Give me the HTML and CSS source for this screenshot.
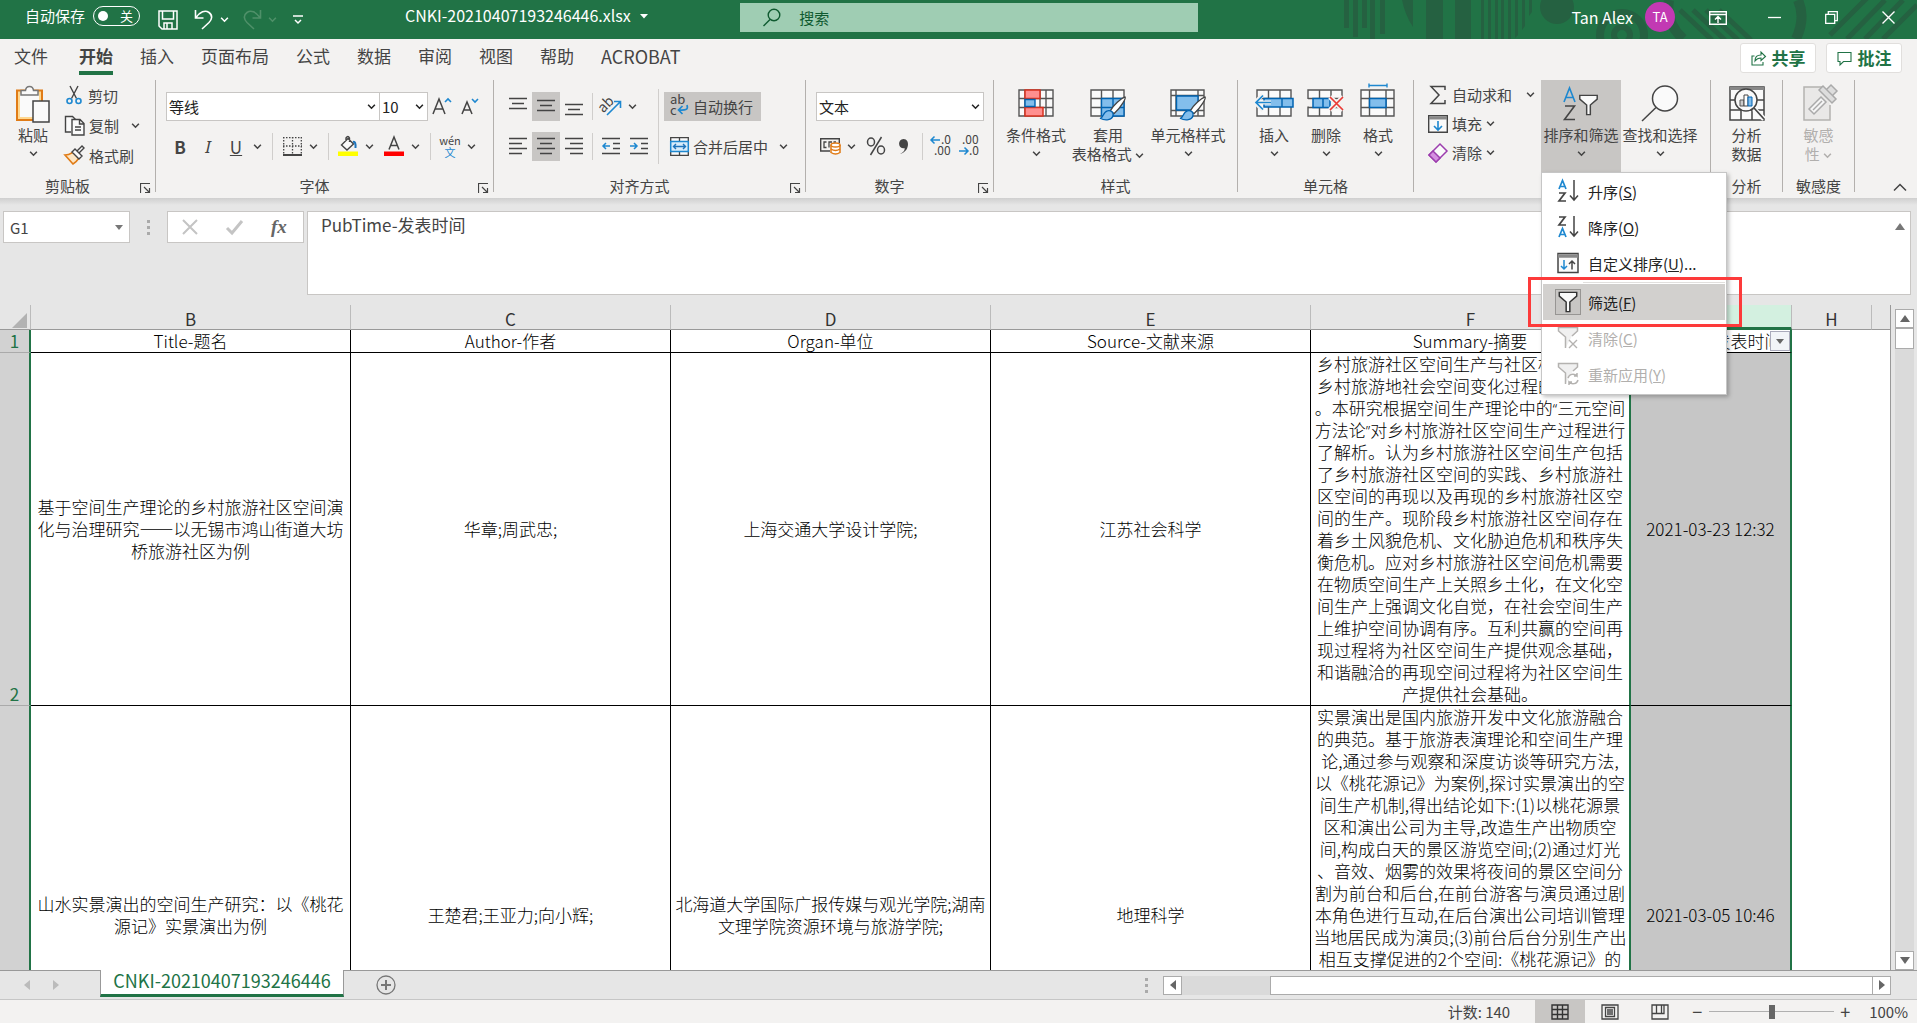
FILE: index.html
```html
<!DOCTYPE html>
<html lang="zh-CN">
<head>
<meta charset="utf-8">
<title>CNKI-20210407193246446.xlsx</title>
<link rel="stylesheet" href="styles.css">
</head>
<body>
<svg class="defs" width="0" height="0" aria-hidden="true">
  <symbol id="chev" viewBox="0 0 8 8"><path d="M1 2.5 4 5.5 7 2.5" fill="none" stroke="currentColor" stroke-width="1.4"/></symbol>
  <symbol id="launch" viewBox="0 0 11 11"><path d="M.5 10V.5H10M4 4l5 5M9.5 5v4.500H5" fill="none" stroke="currentColor" stroke-width="1.200"/></symbol>
  <symbol id="brush" viewBox="0 0 30 28"><path d="M12 16C16 9 23 3 28 1c1 1-3 10-12 18z" fill="#fff" stroke="#444" stroke-width="1.400"/><path d="M1 24c4 0 3-7 8-8 4-1 7 2 6 5-1 5-8 6-14 3z" fill="#83beec" stroke="#0063b1" stroke-width="1.400"/></symbol>
  <symbol id="funnel" viewBox="0 0 22 24"><path d="M1.500 1.500h19v4L13 12v10.500H9V12L1.500 5.500z" fill="#fafafa" stroke="currentColor" stroke-width="1.600"/></symbol>
</svg>

<header class="titlebar">
  <svg class="deco" width="577" height="39" viewBox="0 0 577 39" aria-hidden="true">
    <g fill="#256141"><path d="M4 0h5v28H4zM13 0h5v37h-5zM22 0h5v28h-5zM30 0h5v39h-5zM40 0h5v34h-5zM62 0h11v27Q65 15 62 0zM86 0h17v39H86zM115 0h16v39h-16zM141 0h3v39h-3zM148 0h3v39h-3zM155 0h3v39h-3zM161 0h3v39h-3zM168 0h3v39h-3zM175 0h3v35l-3 3zM182 0h3v26l-3 4zM189 0h3v12l-3 4z"/><circle cx="217" cy="7" r="17"/></g>
    <g fill="none" stroke="#256141"><circle cx="282" cy="35" r="22" stroke-width="8"/><circle cx="282" cy="35" r="8" stroke-width="6"/><path d="M329 0q-4 22 14 39M458 0q8 18-2 39" stroke-width="10"/><path d="M340 10l32 30M353 10l32 30M366 10l32 30M379 10l32 30M490 35 528-3M507 39 545 0M525 39 563 0M543 39l34-34" stroke-width="5"/></g>
  </svg>
  <span class="autosave" id="as">自动保存</span>
  <button class="toggle" role="switch" aria-checked="false" aria-labelledby="as"><i></i><span>关</span></button>
  <button class="qa save" aria-label="保存"><svg width="20" height="20" viewBox="0 0 20 20"><path d="M1 1h18v18H4l-3-3zM4.500 1v8h11V1M6 19v-6h8v6M9 13v6" fill="none" stroke="currentColor" stroke-width="1.500"/></svg></button>
  <button class="qa undo" aria-label="撤消"><svg width="20" height="21" viewBox="0 0 20 21"><path d="M1.500 1v8h8M2 8.500C6 3 11 .5 15 3.500c4 3 3 7 0 10L8 20" fill="none" stroke="currentColor" stroke-width="1.600"/></svg></button>
  <button class="cv" aria-label="撤消列表"><svg width="9" height="9"><use href="#chev"/></svg></button>
  <button class="qa redo" aria-label="恢复"><svg width="20" height="21" viewBox="0 0 20 21"><path d="M18.500 1v8h-8M18 8.500C14 3 9 .5 5 3.500c-4 3-3 7 0 10l7 6.500" fill="none" stroke="currentColor" stroke-width="1.600"/></svg></button>
  <button class="cv dim" aria-label="恢复列表"><svg width="9" height="9"><use href="#chev"/></svg></button>
  <button class="qa more" aria-label="自定义快速访问工具栏"><svg width="10" height="10" viewBox="0 0 10 10"><path d="M0 1h10M2 5l3 3 3-3" fill="none" stroke="currentColor" stroke-width="1.500"/></svg></button>
  <h1 class="filename">CNKI-20210407193246446.xlsx <svg width="8" height="5" viewBox="0 0 8 5"><path d="M0 0h8L4 4.500z" fill="currentColor"/></svg></h1>
  <label class="search"><svg width="18" height="19" viewBox="0 0 18 19"><circle cx="11" cy="7" r="5.800" fill="none" stroke="currentColor" stroke-width="1.400"/><path d="M7 11.500.5 18" stroke="currentColor" stroke-width="1.400"/></svg><input type="text" placeholder="搜索" aria-label="搜索"></label>
  <div class="account"><span>Tan Alex</span><b class="avatar">TA</b></div>
  <div class="winbtns">
    <button aria-label="功能区显示选项"><svg width="18" height="14" viewBox="0 0 18 14"><path d="M.7.7h16.600v12.600H.7zM.7 3.500h16.600M9 12V6M6 8.500l3-3 3 3" fill="none" stroke="currentColor" stroke-width="1.400"/></svg></button>
    <button aria-label="最小化"><svg width="13" height="13"><path d="M0 6.500h13" stroke="currentColor" stroke-width="1.300"/></svg></button>
    <button aria-label="还原"><svg width="13" height="13" viewBox="0 0 13 13"><path d="M.7 3.300h9v9h-9zM3.300 3V.7h9v9H10" fill="none" stroke="currentColor" stroke-width="1.300"/></svg></button>
    <button aria-label="关闭"><svg width="13" height="13"><path d="m.5.500 12 12m0-12-12 12" stroke="currentColor" stroke-width="1.400"/></svg></button>
  </div>
</header>

<nav class="tabs">
  <a href="#" class="file">文件</a><a href="#" class="on">开始</a><a href="#">插入</a><a href="#">页面布局</a><a href="#">公式</a><a href="#">数据</a><a href="#">审阅</a><a href="#">视图</a><a href="#">帮助</a><a href="#" class="latin">ACROBAT</a>
  <div class="tabbtns">
    <button><svg width="15" height="15" viewBox="0 0 15 15"><path d="M3.500 5H1v9h11v-3M4 10c0-4 2-6 6-6V1l4.500 4.500L10 9.500V7C7 7 5.500 8 4 10z" fill="none" stroke="currentColor" stroke-width="1.100"/></svg>共享</button>
    <button><svg width="15" height="15" viewBox="0 0 15 15"><path d="M1 1.500h13v9H6.500L3 14v-3.500H1z" fill="none" stroke="currentColor" stroke-width="1.100"/></svg>批注</button>
  </div>
</nav>

<section class="ribbon">
  <div class="group g-clip">
    <div class="body">
      <button class="big paste"><svg width="36" height="38" viewBox="0 0 36 38"><path d="M2 5.500h25V35H2z" fill="#ffd890" stroke="#e07b16" stroke-width="2"/><path d="M5 8.500h19V32H5z" fill="#fafafa"/><path d="M6 10V5.500h4.500C11 0 18 0 18.500 5.500H23V10z" fill="#fafafa" stroke="#777" stroke-width="1.500"/><path d="M18 16h16v21H18z" fill="#fafafa" stroke="#444" stroke-width="1.500"/></svg><span>粘贴</span><svg class="ch" width="9" height="9"><use href="#chev"/></svg></button>
      <div class="list">
        <button><svg width="20" height="20" viewBox="0 0 20 20"><path d="M6 1l6.500 12.500M14 1 7.500 13.500" stroke="#444" stroke-width="1.400"/><g fill="none" stroke="#1e88d0" stroke-width="1.600"><circle cx="5.500" cy="16" r="2.500"/><circle cx="14.500" cy="16" r="2.500"/></g></svg>剪切</button>
        <div class="pair"><button><svg width="21" height="21" viewBox="0 0 21 21"><path d="M7 17H1.500V1.500h7l3 3" fill="#fafafa" stroke="#444" stroke-width="1.400"/><path d="M8 4.500h8l4 4V20H8zM15.500 4.500V9H20M11 12h6M11 15h6" fill="#fafafa" stroke="#444" stroke-width="1.400"/></svg>复制</button><button class="cv" aria-label="复制选项"><svg width="9" height="9"><use href="#chev"/></svg></button></div>
        <button><svg width="21" height="20" viewBox="0 0 21 20"><path d="M1 10c5 0 5-1 8-3l6 6c-2 3-4 5-6 6z" fill="#fde6c4" stroke="#e07b16" stroke-width="1.600"/><path d="M8 7l3-3 7 7-3 3zM13 6l5-5 2 2-5 5" fill="#fafafa" stroke="#444" stroke-width="1.400"/></svg>格式刷</button>
      </div>
    </div>
    <div class="glabel"><span>剪贴板</span><button aria-label="剪贴板选项"><svg width="11" height="11"><use href="#launch"/></svg></button></div>
  </div>

  <div class="group g-font">
    <div class="body rows">
      <div class="row">
        <label class="combo font"><select aria-label="字体"><option>等线</option></select><svg width="9" height="9"><use href="#chev"/></svg></label><label class="combo size"><select aria-label="字号"><option>10</option></select><svg width="9" height="9"><use href="#chev"/></svg></label>
        <button class="ic grow" aria-label="增大字号"><svg width="20" height="18" viewBox="0 0 20 18"><path d="M1 17 7 2l6 15M3 12h8" fill="none" stroke="#444" stroke-width="1.500"/><path d="m13 5 3-3 3 3" fill="none" stroke="#1e88d0" stroke-width="1.600"/></svg></button>
        <button class="ic grow" aria-label="减小字号"><svg width="18" height="18" viewBox="0 0 18 18"><path d="M1 17 6 5l5 12M3 13h6" fill="none" stroke="#444" stroke-width="1.500"/><path d="m11 2 3 3 3-3" fill="none" stroke="#1e88d0" stroke-width="1.600"/></svg></button>
      </div>
      <div class="row">
        <button class="ic"><b>B</b></button><button class="ic"><em>I</em></button><button class="ic"><u>U</u></button><button class="cv" aria-label="下划线选项"><svg width="9" height="9"><use href="#chev"/></svg></button><i class="sep wide"></i>
        <button class="ic" aria-label="边框"><svg width="19" height="19" viewBox="0 0 19 19"><path d="M.7 0v17M18.300 0v17M9.500 0v17M0 .7h19M0 9h19" stroke="#444" stroke-width="1.300" stroke-dasharray="1.500 1.500"/><path d="M0 18h19" stroke="#444" stroke-width="2"/></svg></button><button class="cv" aria-label="边框选项"><svg width="9" height="9"><use href="#chev"/></svg></button><i class="sep wide"></i>
        <button class="ic" aria-label="填充颜色"><svg width="20" height="20" viewBox="0 0 20 20"><path d="M3.500 9 10 2.500l5.500 5.500L9 14zM8 5V2q2-3 3.500 0v4" fill="#fafafa" stroke="#444" stroke-width="1.400"/><path d="M15 6q3-1 2.500 6" fill="none" stroke="#1e74bb" stroke-width="2"/><path d="M0 15.500h20V20H0z" fill="#ff0"/></svg></button><button class="cv" aria-label="填充颜色选项"><svg width="9" height="9"><use href="#chev"/></svg></button>
        <button class="ic nudge" aria-label="字体颜色"><svg width="20" height="20" viewBox="0 0 20 20"><path d="M5 13.500 10 1l5 12.500M6.500 9.500h7" fill="none" stroke="#444" stroke-width="1.500"/><path d="M0 15.500h20V20H0z" fill="red"/></svg></button><button class="cv" aria-label="字体颜色选项"><svg width="9" height="9"><use href="#chev"/></svg></button><i class="sep wide"></i>
        <button class="ic wen"><span>wén</span><span class="blue">文</span></button><button class="cv" aria-label="拼音选项"><svg width="9" height="9"><use href="#chev"/></svg></button>
      </div>
    </div>
    <div class="glabel"><span>字体</span><button aria-label="字体选项"><svg width="11" height="11"><use href="#launch"/></svg></button></div>
  </div>

  <div class="group g-align">
    <div class="body">
      <div class="rows left">
        <div class="row">
          <button class="ic" aria-label="顶端对齐"><svg width="18" height="18"><path d="M0 1.500h18M3 6.500h12M0 11.500h18" stroke="#444" stroke-width="1.500"/></svg></button><button class="ic on" aria-label="垂直居中"><svg width="18" height="18"><path d="M0 3.500h18M3 8.500h12M0 13.500h18" stroke="#444" stroke-width="1.500"/></svg></button><button class="ic" aria-label="底端对齐"><svg width="18" height="18"><path d="M0 7.500h18M3 12.500h12M0 17.500h18" stroke="#444" stroke-width="1.500"/></svg></button><i class="sep"></i><button class="ic" aria-label="方向"><svg width="22" height="22" viewBox="0 0 22 22"><text x="-2" y="14" transform="rotate(-45 6 10)" font-size="14" fill="#444">ab</text><path d="M7 20 20 7M14 6.500h6.500V13" fill="none" stroke="#1e88d0" stroke-width="1.600"/></svg></button><button class="cv" aria-label="方向选项"><svg width="9" height="9"><use href="#chev"/></svg></button>
        </div>
        <div class="row">
          <button class="ic" aria-label="左对齐"><svg width="18" height="18"><path d="M0 1.500h18M0 6.500h13M0 11.500h18M0 16.500h13" stroke="#444" stroke-width="1.500"/></svg></button><button class="ic on" aria-label="居中"><svg width="18" height="18"><path d="M0 1.500h18M3 6.500h12M0 11.500h18M3 16.500h12" stroke="#444" stroke-width="1.500"/></svg></button><button class="ic" aria-label="右对齐"><svg width="18" height="18"><path d="M0 1.500h18M5 6.500h13M0 11.500h18M5 16.500h13" stroke="#444" stroke-width="1.500"/></svg></button><i class="sep"></i><button class="ic" aria-label="减少缩进量"><svg width="18" height="18"><path d="M0 1.500h18M11 6.500h7M11 11.500h7M0 16.500h18" stroke="#444" stroke-width="1.500"/><path d="M8 9H1m3-3L1 9l3 3" fill="none" stroke="#1e88d0" stroke-width="1.500"/></svg></button><button class="ic" aria-label="增加缩进量"><svg width="18" height="18"><path d="M0 1.500h18M11 6.500h7M11 11.500h7M0 16.500h18" stroke="#444" stroke-width="1.500"/><path d="M0 9h7M4 6l3 3-3 3" fill="none" stroke="#1e88d0" stroke-width="1.500"/></svg></button>
        </div>
      </div>
      <i class="sep tall"></i>
      <div class="rows right">
        <div class="row"><button class="txt on"><svg width="19" height="20" viewBox="0 0 19 20"><text x="0" y="8" font-size="13" fill="#444">ab</text><text x="0" y="19" font-size="13" fill="#444">c</text><path d="M17 9c2 6-4 5-8 5m3.500-4L8.500 14l4 4" fill="none" stroke="#1e88d0" stroke-width="1.700"/></svg>自动换行</button></div>
        <div class="row"><button class="txt"><svg width="19" height="19" viewBox="0 0 19 19"><path d="M.7.7h17.600v17.600H.7zM9.500 0v4M9.500 15v4" fill="#fafafa" stroke="#444" stroke-width="1.300"/><path d="M.7 4.500h17.600v10H.7z" fill="#d8ecfa" stroke="#1e88d0" stroke-width="1.500"/><path d="M3.500 9.500h12M6 7 3.500 9.500 6 12m7-5 2.500 2.500L13 12" fill="none" stroke="#1e74bb" stroke-width="1.400"/></svg>合并后居中</button><button class="cv" aria-label="合并选项"><svg width="9" height="9"><use href="#chev"/></svg></button></div>
      </div>
    </div>
    <div class="glabel"><span>对齐方式</span><button aria-label="对齐选项"><svg width="11" height="11"><use href="#launch"/></svg></button></div>
  </div>

  <div class="group g-num">
    <div class="body rows">
      <div class="row"><label class="combo fmt"><select aria-label="数字格式"><option>文本</option></select><svg width="9" height="9"><use href="#chev"/></svg></label></div>
      <div class="row">
        <button class="ic" aria-label="会计数字格式"><svg width="21" height="18" viewBox="0 0 21 18"><path d="M10 14H.7V1.700h18.600V6" fill="none" stroke="#444" stroke-width="1.400"/><path d="M6.500 5H4v5.500h2.500M12 5H9v5.500M16 5h-2.500" fill="none" stroke="#444" stroke-width="1.300"/><path d="M11 8v7.500q4.500 3 9 0V8" fill="#fff" stroke="#e07b16" stroke-width="1.500"/><ellipse cx="15.500" cy="8" rx="4.500" ry="2" fill="#fff" stroke="#e07b16" stroke-width="1.500"/><path d="M11 12q4.500 3 9 0" fill="none" stroke="#e07b16" stroke-width="1.500"/></svg></button><button class="cv" aria-label="货币选项"><svg width="9" height="9"><use href="#chev"/></svg></button><button class="ic pct nudge" aria-label="百分比"><svg width="20" height="18" viewBox="0 0 20 18"><g fill="none" stroke="#444" stroke-width="1.500"><ellipse cx="5" cy="5" rx="3.500" ry="4"/><ellipse cx="15" cy="13" rx="3.500" ry="4"/><path d="M15.500 0 4.500 18"/></g></svg></button><button class="ic" aria-label="千位分隔样式"><svg width="12" height="18" viewBox="0 0 12 18"><path d="M2 17c4-2 5-4 4.500-6C0 13-1 2 5.500 2c7 0 6 13-3.500 15z" fill="#444"/></svg></button><i class="sep"></i>
        <button class="ic" aria-label="增加小数位数"><svg width="20" height="20" viewBox="0 0 20 20"><text x="10" y="8" font-size="12" fill="#444">.0</text><text x="3" y="19" font-size="12" fill="#444">.00</text><path d="M9 4H0m3.500-3.500L0 4l3.500 3.500" fill="none" stroke="#1e88d0" stroke-width="1.500"/></svg></button><button class="ic" aria-label="减少小数位数"><svg width="20" height="20" viewBox="0 0 20 20"><text x="3" y="8" font-size="12" fill="#444">.00</text><text x="10" y="19" font-size="12" fill="#444">.0</text><path d="M0 15h9M5.500 11.500 9 15l-3.500 3.500" fill="none" stroke="#1e88d0" stroke-width="1.500"/></svg></button>
      </div>
    </div>
    <div class="glabel"><span>数字</span><button aria-label="数字选项"><svg width="11" height="11"><use href="#launch"/></svg></button></div>
  </div>

  <div class="group g-style">
    <div class="body">
      <button class="big"><svg width="38" height="38" viewBox="0 0 38 38"><path d="M2 5h34v26H2zM2 13.500h34M2 22.500h34M8 5v26M29 5v26M23 5v26" fill="#fafafa" stroke="#555" stroke-width="1.400"/><path d="M8 5h15v8.500H8zM8 22.500h18V31H8z" fill="#ff8f8f" stroke="#d8321f" stroke-width="1.500"/><path d="M8 14.500h10v7H8z" fill="#83beec" stroke="#0063b1" stroke-width="1.400"/></svg><span>条件格式</span><svg class="ch" width="9" height="9"><use href="#chev"/></svg></button>
      <button class="big"><svg width="38" height="38" viewBox="0 0 38 38"><path d="M2 5h33v26H2zM2 13.500h33M2 22.500h33M12.500 5v26M24 5v26" fill="#fafafa" stroke="#555" stroke-width="1.400"/><path d="M12.500 13.500H35V31H12.500z" fill="#83beec"/><path d="M12.500 31V13.500H35V31H12.500M24 13.500V31M12.500 22.500H35" fill="none" stroke="#0063b1" stroke-width="1.400"/><use href="#brush" x="10" y="11" width="28" height="26"/></svg><span>套用<br>表格格式 <svg width="9" height="9"><use href="#chev"/></svg></span></button>
      <button class="big cellstyle"><svg width="38" height="38" viewBox="0 0 38 38"><path d="M2 5h33v26H2zM2 10.500h33M2 25.500h33M7 5v26M29 5v26" fill="#fafafa" stroke="#555" stroke-width="1.400"/><path d="M7.500 11H29v14H7.500z" fill="#83beec" stroke="#0063b1" stroke-width="1.400"/><use href="#brush" x="10" y="11" width="28" height="26"/></svg><span>单元格样式</span><svg class="ch" width="9" height="9"><use href="#chev"/></svg></button>
    </div>
    <div class="glabel"><span>样式</span></div>
  </div>

  <div class="group g-cells">
    <div class="body">
      <button class="big"><svg width="40" height="38" viewBox="0 0 40 38"><path d="M3 5h34v26H3zM14.500 5v26M26 5v26M3 13.500h34" fill="#fafafa" stroke="#555" stroke-width="1.400"/><path d="M10 13.500h29v8.500H10z" fill="#83beec" stroke="#0063b1" stroke-width="1.500"/><path d="M28 13.500V22" stroke="#0063b1" stroke-width="1.400"/><path d="M17 17.500H2M9 9.500l-8 8 8 8" fill="none" stroke="#f3f2f1" stroke-width="4"/><path d="M17 17.500H2M9 10.500l-7 7 7 7" fill="none" stroke="#1e88d0" stroke-width="1.700"/></svg><span>插入</span><svg class="ch" width="9" height="9"><use href="#chev"/></svg></button>
      <button class="big"><svg width="40" height="38" viewBox="0 0 40 38"><path d="M2 5h34v26H2zM13.500 5v26M25 5v26" fill="#fafafa" stroke="#555" stroke-width="1.400"/><path d="M0 14h38v7.500H0z" fill="#f3f2f1"/><path d="M2 13.500h34M2 22.500h34" stroke="#555" stroke-width="1.400"/><path d="M7 13.500h17v9H7zM17 13.500v9" fill="#83beec" stroke="#0063b1" stroke-width="1.500"/><path d="m24 12 13 13m0-13L24 25" stroke="#f3f2f1" stroke-width="5"/><path d="m24 12 13 13m0-13L24 25" stroke="#ea3a35" stroke-width="1.700"/></svg><span>删除</span><svg class="ch" width="9" height="9"><use href="#chev"/></svg></button>
      <button class="big"><svg width="38" height="38" viewBox="0 0 38 38"><path d="M2 5h33v26H2zM2 13.500h33M2 22.500h33M10.500 5v26M27 5v26" fill="#fafafa" stroke="#555" stroke-width="1.400"/><path d="M10.500 13.500H27v9H10.500z" fill="#83beec" stroke="#0063b1" stroke-width="1.500"/><path d="M10 .5h18M10-1.500v4M28-1.500v4" stroke="#1e88d0" stroke-width="1.400"/></svg><span>格式</span><svg class="ch" width="9" height="9"><use href="#chev"/></svg></button>
    </div>
    <div class="glabel"><span>单元格</span></div>
  </div>

  <div class="group g-edit">
    <div class="body">
      <div class="list">
        <div class="pair"><button><svg width="20" height="20" viewBox="0 0 20 20"><path d="M17 5V1.500H3L11 10l-8 8.500h14V15" fill="none" stroke="#444" stroke-width="1.500"/></svg>自动求和</button><button class="cv" aria-label="求和选项"><svg width="9" height="9"><use href="#chev"/></svg></button></div>
        <button><svg width="20" height="18" viewBox="0 0 20 18"><path d="M.7.7h18.600v16.600H.7z" fill="#fafafa" stroke="#444" stroke-width="1.400"/><path d="M1 3h18" stroke="#888" stroke-width="3"/><path d="M10 6v9M6 11l4 4 4-4" fill="none" stroke="#1e88d0" stroke-width="1.600"/></svg>填充<svg width="9" height="9"><use href="#chev"/></svg></button>
        <button><svg width="20" height="20" viewBox="0 0 20 20"><path d="M1 12 12 1l7 7L8 19z" fill="#fafafa" stroke="#9c3dae" stroke-width="1.500"/><path d="m1 12 4-4 7 7-4 4z" fill="#d48fe0" stroke="#9c3dae" stroke-width="1.500"/></svg>清除<svg width="9" height="9"><use href="#chev"/></svg></button>
      </div>
      <div class="sortwrap">
        <button class="big on" aria-haspopup="true" aria-expanded="true"><svg width="38" height="38" viewBox="0 0 38 38"><path d="M2 17 7.500 3 13 17M4 12.500h7" fill="none" stroke="#1e88d0" stroke-width="1.600"/><path d="M3 21h9.500L2.500 34.500H13" fill="none" stroke="#444" stroke-width="1.600"/><use href="#funnel" x="16" y="9" width="21" height="22"/></svg><span>排序和筛选</span><svg class="ch" width="9" height="9"><use href="#chev"/></svg></button>
        <div class="menu" role="menu">
          <button role="menuitem"><svg width="22" height="24" viewBox="0 0 22 24"><path d="M2 10 5.500 1.500 9 10M3 7.500h5" fill="none" stroke="#1e88d0" stroke-width="1.700"/><path d="M2 14h6L2 22h7" fill="none" stroke="#444" stroke-width="1.700"/><path d="M17 1v20m-4-4.500 4 4.500 4-4.500" fill="none" stroke="#444" stroke-width="1.500"/></svg><span>升序(<u>S</u>)</span></button>
          <button role="menuitem"><svg width="22" height="24" viewBox="0 0 22 24"><path d="M2 22 5.500 13.500 9 22M3 19.500h5" fill="none" stroke="#1e88d0" stroke-width="1.700"/><path d="M2 2h6L2 10h7" fill="none" stroke="#444" stroke-width="1.700"/><path d="M17 1v20m-4-4.500 4 4.500 4-4.500" fill="none" stroke="#444" stroke-width="1.500"/></svg><span>降序(<u>O</u>)</span></button>
          <button role="menuitem"><svg width="22" height="22" viewBox="0 0 22 22"><path d="M1 1.500h20v19H1z" fill="#fafafa" stroke="#444" stroke-width="1.500"/><path d="M1 4h20" stroke="#888" stroke-width="3.500"/><path d="M7 8v9m-3-3 3 3 3-3" fill="none" stroke="#1e88d0" stroke-width="1.500"/><path d="M15 17.500V9m-3 3 3-3 3 3" fill="none" stroke="#444" stroke-width="1.500"/></svg><span>自定义排序(<u>U</u>)...</span></button>
          <hr>
          <button role="menuitem" class="hot"><span class="mark"><svg width="22" height="22"><use href="#funnel"/></svg></span><span>筛选(<u>F</u>)</span></button>
          <button role="menuitem" disabled><svg width="22" height="24" viewBox="0 0 22 24"><path d="M8.500 22V11L1.500 5V1.500h19V5L15 10" fill="#f0f0f0" stroke="#b4b2b0" stroke-width="1.500"/><path d="m12 14 8 8m0-8-8 8" stroke="#b4b2b0" stroke-width="1.400"/></svg><span>清除(<u>C</u>)</span></button>
          <button role="menuitem" disabled><svg width="22" height="24" viewBox="0 0 22 24"><path d="M8.500 22V11L1.500 5V1.500h19V5L16 9" fill="#f0f0f0" stroke="#b4b2b0" stroke-width="1.500"/><path d="M11 16c1-4 6-5 9-2v-3m0 3h-3M21 18c-1 4-6 5-9 2v3m0-3h3" fill="none" stroke="#b4b2b0" stroke-width="1.500"/></svg><span>重新应用(<u>Y</u>)</span></button>
        </div>
      </div>
      <button class="big find"><svg width="38" height="38" viewBox="0 0 38 38"><circle cx="24" cy="13.500" r="12.500" fill="#fafafa" stroke="#444" stroke-width="1.500"/><path d="M15 22.500 1 36" stroke="#444" stroke-width="1.500"/></svg><span>查找和选择</span><svg class="ch" width="9" height="9"><use href="#chev"/></svg></button>
    </div>
  </div>

  <div class="group g-one">
    <div class="body"><button class="big"><svg width="38" height="38" viewBox="0 0 38 38"><path d="M2 2h34v33H2zM2 15h34M2 25h34M13 25v10M24 25v10" fill="#fafafa" stroke="#444" stroke-width="1.500"/><path d="M2 3.500h34" stroke="#888" stroke-width="3"/><circle cx="18" cy="15" r="11" fill="#fafafa" stroke="#444" stroke-width="1.500"/><path d="m26 24 10 10" stroke="#fafafa" stroke-width="5"/><path d="m26 23 10 11" stroke="#444" stroke-width="1.700"/><path d="M12 15h4v6h-4z" fill="#ccc" stroke="#555"/><path d="M16 10h4v11h-4z" fill="#fff" stroke="#444"/><path d="M20 12h4v9h-4z" fill="#83beec" stroke="#0063b1"/></svg><span>分析<br>数据</span></button></div>
    <div class="glabel"><span>分析</span></div>
  </div>
  <div class="group g-one">
    <div class="body"><button class="big" disabled><svg width="38" height="38" viewBox="0 0 38 38"><path d="M24 2H4v33h26V20" fill="#e9e8e7" stroke="#b4b2b0" stroke-width="1.500"/><path d="m9 24 12-12 5 5-12 12z" fill="#f6f6f6" stroke="#aaa" stroke-width="1.500"/><path d="m13 25 9-9" stroke="#aaa" stroke-width="1.500"/><path d="m19 5 4-4 13 13-4 4zM27 4l4-4 6 6-4 4" fill="#ddd" stroke="#aaa" stroke-width="1.500"/></svg><span>敏感<br>性 <svg width="9" height="9"><use href="#chev"/></svg></span></button></div>
    <div class="glabel"><span>敏感度</span></div>
  </div>
  <button class="collapse" aria-label="折叠功能区"><svg width="14" height="9"><path d="m1 7.500 6-6 6 6" fill="none" stroke="#444" stroke-width="1.500"/></svg></button>
</section>

<section class="formula">
  <label class="combo namebox"><input type="text" value="G1" aria-label="名称框"><svg width="8" height="5"><path d="M0 0h8L4 5z" fill="#777"/></svg></label>
  <i class="dots"></i>
  <div class="fxbox">
    <button aria-label="取消"><svg width="16" height="16"><path d="m1 1 14 14m0-14L1 15" stroke="#c4c4c4" stroke-width="2"/></svg></button>
    <button aria-label="输入"><svg width="17" height="15"><path d="m1 8 5 5L16 1" fill="none" stroke="#c4c4c4" stroke-width="3"/></svg></button>
    <button class="fx">fx</button>
  </div>
  <div class="fbox"><textarea aria-label="编辑栏">PubTime-发表时间</textarea><svg width="10" height="7"><path d="M0 7h10L5 0z" fill="#777"/></svg></div>
</section>

<main class="gridwrap">
  <div class="sheet">
    <table>
      <colgroup><col class="c-row"><col class="c-wide"><col class="c-wide"><col class="c-wide"><col class="c-wide"><col class="c-wide"><col class="c-g"><col class="c-h"><col></colgroup>
      <thead><tr><th class="corner"><svg width="15" height="15"><path d="M15 0v15H0z" fill="#b2b2b2"/></svg></th><th>B</th><th>C</th><th>D</th><th>E</th><th>F</th><th class="sel">G</th><th>H</th><th></th></tr></thead>
      <tbody>
        <tr class="r1"><th>1</th><td>Title-题名</td><td>Author-作者</td><td>Organ-单位</td><td>Source-文献来源</td><td class="f">Summary-摘要</td><td class="g head"><div>PubTime-发表时间<button aria-label="筛选"><svg width="8" height="5"><path d="M0 0h8L4 5z" fill="#666"/></svg></button></div></td><td class="e"></td><td class="e"></td></tr>
        <tr class="r2"><th>2</th><td>基于空间生产理论的乡村旅游社区空间演<br>化与治理研究——以无锡市鸿山街道大坊<br>桥旅游社区为例</td><td>华章;周武忠;</td><td>上海交通大学设计学院;</td><td>江苏社会科学</td><td class="f">乡村旅游社区空间生产与社区权力关系是<br>乡村旅游地社会空间变化过程的重要视角<br>。本研究根据空间生产理论中的<span class="q">“</span>三元空间<br>方法论<span class="q">”</span>对乡村旅游社区空间生产过程进行<br>了解析。认为乡村旅游社区空间生产包括<br>了乡村旅游社区空间的实践、乡村旅游社<br>区空间的再现以及再现的乡村旅游社区空<br>间的生产。现阶段乡村旅游社区空间存在<br>着乡土风貌危机、文化胁迫危机和秩序失<br>衡危机。应对乡村旅游社区空间危机需要<br>在物质空间生产上关照乡土化，在文化空<br>间生产上强调文化自觉，在社会空间生产<br>上维护空间协调有序。互利共赢的空间再<br>现过程将为社区空间生产提供观念基础，<br>和谐融洽的再现空间过程将为社区空间生<br>产提供社会基础。</td><td class="g">2021-03-23 12:32</td><td class="e"></td><td class="e"></td></tr>
        <tr class="r3"><th></th><td>山水实景演出的空间生产研究：以《桃花<br>源记》实景演出为例</td><td>王楚君;王亚力;向小辉;</td><td>北海道大学国际广报传媒与观光学院;湖南<br>文理学院资源环境与旅游学院;</td><td>地理科学</td><td class="f top">实景演出是国内旅游开发中文化旅游融合<br>的典范。基于旅游表演理论和空间生产理<br>论,通过参与观察和深度访谈等研究方法,<br>以《桃花源记》为案例,探讨实景演出的空<br>间生产机制,得出结论如下:(1)以桃花源景<br>区和演出公司为主导,改造生产出物质空<br>间,构成白天的景区游览空间;(2)通过灯光<br>、音效、烟雾的效果将夜间的景区空间分<br>割为前台和后台,在前台游客与演员通过剧<br>本角色进行互动,在后台演出公司培训管理<br>当地居民成为演员;(3)前台后台分别生产出<br>相互支撑促进的2个空间:《桃花源记》的</td><td class="g">2021-03-05 10:46</td><td class="e"></td><td class="e"></td></tr>
      </tbody>
    </table>
  </div>
  <div class="vscroll"><button aria-label="向上滚动"><svg width="10" height="7"><path d="M0 7h10L5 0z" fill="#666"/></svg></button><i class="thumb"></i><i class="track"></i><button aria-label="向下滚动"><svg width="10" height="7"><path d="M0 0h10L5 7z" fill="#666"/></svg></button></div>
</main>

<footer class="sheetbar">
  <button class="nav" aria-label="上一张"><svg width="6" height="10"><path d="M6 0v10L0 5z" fill="#bbb"/></svg></button>
  <button class="nav" aria-label="下一张"><svg width="6" height="10"><path d="M0 0v10l6-5z" fill="#bbb"/></svg></button>
  <a href="#" class="sheettab">CNKI-20210407193246446</a>
  <button class="add" aria-label="新工作表"><svg width="20" height="20"><circle cx="10" cy="10" r="9" fill="none" stroke="#777" stroke-width="1.300"/><path d="M5 10h10M10 5v10" stroke="#777" stroke-width="2"/></svg></button>
  <i class="dots"></i>
  <div class="hscroll"><button aria-label="向左滚动"><svg width="6" height="10"><path d="M6 0v10L0 5z" fill="#666"/></svg></button><i class="track"></i><i class="thumb"></i><button aria-label="向右滚动"><svg width="6" height="10"><path d="M0 0v10l6-5z" fill="#666"/></svg></button></div>
</footer>
<footer class="status">
  <span>计数: 140</span>
  <div class="views">
    <button class="on" aria-label="普通"><svg width="18" height="16"><path d="M1 1h16v14H1zM1 5.500h16M1 10.500h16M6.500 1v14M11.500 1v14" fill="none" stroke="#333" stroke-width="1.400"/></svg></button>
    <button aria-label="页面布局"><svg width="18" height="16"><path d="M1 1h16v14H1zM4.500 3.500h9v9h-9zM6 6h6M6 8h6M6 10h6" fill="none" stroke="#444" stroke-width="1.300"/></svg></button>
    <button aria-label="分页预览"><svg width="18" height="16"><path d="M1 1h16v14H1zM1 9.500h9.500V1M5.500 1v8.500M10.500 9.500H13V1" fill="none" stroke="#444" stroke-width="1.300"/></svg></button>
  </div>
  <button class="zb">−</button><input type="range" min="0" max="100" value="50" aria-label="缩放"><button class="zb">+</button><span class="zoom">100%</span>
</footer>
</body>
</html>
```
FILE: styles.css
```css
* { box-sizing: border-box; }
body {
  margin: 0;
  height: 100vh;
  display: flex;
  flex-direction: column;
  overflow: hidden;
  background: #e6e6e6;
  color: #444;
  font: 15px/19px "Noto Sans CJK SC", sans-serif;
}
button, input, select, textarea { font: inherit; color: inherit; }
button { border: 0; padding: 0; background: none; display: flex; align-items: center; justify-content: center; white-space: nowrap; }
a { color: inherit; text-decoration: none; }
svg { flex: none; overflow: visible; }
svg text { font-family: "Noto Sans CJK SC", sans-serif; }
.defs { position: absolute; }

/* title bar */
.titlebar { position: relative; flex: none; height: 39px; padding-left: 25px; display: flex; align-items: center; background: #217346; color: #fff; }
.deco { position: absolute; right: 0; top: 0; overflow: hidden; }
.titlebar > :not(.deco) { z-index: 1; }
.autosave { width: 68px; margin-bottom: 8px; }
.toggle { width: 47px; height: 20px; margin-bottom: 8px; padding: 0 6px 0 4px; justify-content: space-between; border: 1px solid #fff; border-radius: 10px; font-size: 13px; line-height: 18px; }
.toggle i { width: 10px; height: 10px; border-radius: 5px; background: #fff; }
.save { margin-left: 18px; }
.undo { margin-left: 16px; }
.cv { width: 14px; height: 28px; flex: none; }
.undo + .cv, .redo + .cv { margin-left: 3px; }
.redo { margin-left: 11px; color: #4f9069; }
.dim { color: #4f9069; }
.more { margin-left: 14px; }
.filename { flex: 11; min-width: 0; margin: 0 0 10px; text-indent: 102px; font-size: 16px; line-height: 20px; font-weight: 400; white-space: nowrap; }
.filename svg { margin: 0 0 3px 6px; }
.search { width: 458px; height: 29px; margin-bottom: 4px; padding-left: 23px; display: flex; align-items: center; gap: 18px; background: #9fcdb3; color: #0f5a30; }
.search input { flex: 1; border: 0; background: none; padding: 0; }
.search input::placeholder { color: inherit; opacity: 1; }
.account { flex: 12; min-width: 0; margin-bottom: 5px; display: flex; align-items: center; justify-content: flex-end; gap: 12px; font-size: 16px; }
.avatar { width: 30px; height: 30px; border-radius: 15px; background: #c239b3; font-size: 13px; line-height: 30px; font-weight: 400; text-align: center; }
.winbtns { display: flex; margin: 0 0 4px 14px; }
.winbtns button { width: 57px; height: 34px; }

/* tabs */
.tabs { flex: none; height: 41px; padding: 4px 15px 0 14px; display: flex; gap: 27px; background: #f3f2f1; font-size: 17px; line-height: 26px; }
.tabs a { height: 32px; }
.tabs .file { margin-right: 4px; }
.tabs .on { font-weight: 700; border-bottom: 4px solid #217346; background: none; }
.tabs .latin { font-size: 18px; }
.tabbtns { margin-left: auto; display: flex; gap: 10px; }
.tabbtns button { width: 76px; height: 30px; gap: 6px; border: 1px solid #e1dfdd; border-radius: 3px; background: #fff; color: #217346; font-weight: 700; }

/* ribbon */
.ribbon { flex: none; display: flex; height: 118px; padding-bottom: 6px; background: #f3f2f1; }
.group { display: flex; flex-direction: column; border-right: 1px solid #b3b0ad; flex: none; }
.body { flex: 1; display: flex; }
.glabel { display: flex; height: 12px; line-height: 12px; text-align: center; }
.glabel span { flex: 1; }
.glabel button { width: 20px; padding-top: 4px; }
.g-clip { width: 156px; }
.g-font { width: 338px; }
.g-align { width: 312px; }
.g-num { width: 188px; }
.g-style { width: 244px; }
.g-style .body { padding-left: 6px; }
.g-cells { width: 176px; }
.g-cells .body { padding-left: 10px; }
.g-edit { width: 297px; }
.g-one { width: 72px; }
.big { width: 72px; height: 92px; padding-top: 5px; flex-direction: column; justify-content: flex-start; }
.big > svg:first-child { margin-bottom: 2px; }
.big .ch { margin-top: 5px; }
.big:disabled { color: #b1afad; }
.big.paste { width: 64px; padding-left: 2px; }
.cellstyle { width: 88px; }
.g-cells .big { width: 52px; }
.find { width: 78px; }
.on { background: #c8c6c4; }
.list { display: flex; flex-direction: column; align-items: flex-start; }
.list button { gap: 4px; height: 29px; }
.g-clip .list > * { height: 30px; }
.pair { display: flex; align-items: center; gap: 11px; }
.g-clip .pair { gap: 9px; }
.g-edit .list { width: 127px; padding-left: 14px; }
.rows { display: flex; flex-direction: column; padding: 6px 0 0 10px; }
.row { display: flex; align-items: center; height: 40px; }
.ic { width: 28px; height: 29px; flex: none; font-size: 17px; }
.ic em { font-family: "Noto Sans", sans-serif; }
.nudge { margin-left: 4px; }
.sep { width: 1px; height: 27px; margin: 0 4px; background: #d0cecc; }
.wide { margin: 0 5px 0 8px; }
.tall { height: 75px; margin: 9px 5px 0 0; }
.left { width: 164px; }
.right { padding-left: 0; }
.txt { height: 29px; padding: 0 8px 0 6px; gap: 4px; }
.wen { flex-direction: column; font-size: 11px; line-height: 12px; }
.blue { color: #1e88d0; }
.combo { display: grid; height: 29px; align-items: center; border: 1px solid #c8c6c4; background: #fff; color: #222; }
.combo > * { grid-area: 1 / 1; }
.combo > svg { justify-self: end; margin-right: 3px; pointer-events: none; }
.combo select, .combo input { appearance: none; width: 100%; height: 27px; border: 0; padding: 0 2px; background: none; min-width: 0; }
.font { width: 214px; }
.size { width: 49px; margin-left: -1px; }
.fmt { width: 168px; }
.collapse { margin: auto 10px 0 auto; }

/* sort and filter menu */
.sortwrap { position: relative; width: 80px; }
.sortwrap > .big { width: 80px; }
.menu { position: absolute; z-index: 5; left: 0; top: 92px; width: 186px; padding: 0 1px 2px; border: 1px solid #c6c6c6; background: #fff; color: #222; box-shadow: 2px 2px 4px rgba(0, 0, 0, .25); }
.menu button { width: 100%; height: 36px; padding-left: 14px; gap: 9px; justify-content: flex-start; }
.menu button:disabled { color: #b1afad; }
.menu hr { margin: 1px 0 1px 40px; border: 0; border-top: 1px solid #e1dfdd; }
.menu .hot { position: relative; padding-left: 12px; gap: 7px; background: #d2d0ce; }
.hot::after { content: ""; position: absolute; inset: -7px -17px -7px -15px; border: 3px solid #fd3a3a; }
.mark { display: flex; padding: 1px; border: 1px solid #979593; background: #c8c6c4; color: #333; }

/* formula bar */
.formula { flex: none; display: flex; height: 107px; padding: 13px 6px 10px 3px; background: linear-gradient(#cfcfcf, #e6e6e6 7px); }
.namebox { width: 127px; height: 32px; color: #444; }
.combo.namebox input { padding-left: 6px; }
.namebox > svg { margin-right: 6px; }
.dots { width: 3px; height: 15px; background: repeating-linear-gradient(#aaa 0 3px, transparent 3px 6px); }
.formula .dots { margin: 9px 17px; }
.fxbox { display: flex; width: 137px; height: 32px; margin-right: 3px; padding: 0 2px 0 0; border: 1px solid #c8c6c4; background: #fff; }
.fxbox button { flex: 1; }
.fxbox .fx { font: italic 700 19px "Liberation Serif", serif; color: #666; }
.fbox { flex: 1; display: flex; height: 84px; padding: 0 5px 0 13px; border: 1px solid #c8c6c4; background: #fff; }
.fbox textarea { flex: 1; border: 0; padding: 1px 0; resize: none; outline: 0; background: none; font-size: 17px; line-height: 24px; }
.fbox svg { margin-top: 11px; }

/* spreadsheet */
.gridwrap { flex: 1; min-height: 0; display: flex; }
.sheet { flex: 1; min-width: 0; overflow: hidden; border-right: 1px solid #999; }
table { width: 100%; table-layout: fixed; border-collapse: separate; border-spacing: 0; background: #fff; color: #000; font-size: 17px; line-height: 22px; }
.c-row { width: 31px; }
.c-wide { width: 320px; }
.c-g { width: 161px; }
.c-h { width: 80px; }
th, td { padding: 0; text-align: center; font-weight: 300; white-space: nowrap; }
th { font-weight: 400; }
thead th { height: 25px; padding-top: 4px; line-height: 20px; background: #e6e6e6; color: #333; border-bottom: 1px solid #999; border-right: 1px solid #bbb; }
thead th:last-child { border-right: 0; }
thead .sel { padding-top: 2px; background: #d3f0e0; color: #217346; border-bottom: 3px solid #217346; }
.corner svg { display: block; margin: 2px 3px 0 auto; }
tbody th { background: #d2d2d2; color: #217346; border-right: 2px solid #217346; border-bottom: 1px solid #aaa; vertical-align: bottom; }
td { border-right: 1px solid #000; border-bottom: 1px solid #000; }
.r1 { height: 23px; }
.r2 { height: 353px; }
.r3 { height: 418px; }
td.e { border: 0; }
td.f { border-right: 2px solid #217346; }
td.g { border-right: 2px solid #217346; background: #c6c6c6; }
td.head { background: #fff; }
.head div { display: flex; position: relative; justify-content: center; }
.head button { position: absolute; right: 0; top: 1px; width: 20px; height: 20px; border: 1px solid #aab; background: #f2f4f8; }
td.top { vertical-align: top; }
.q { font-family: "Noto Sans", sans-serif; font-size: 14px; line-height: 10px; }
.vscroll { width: 26px; padding: 4px 3px 0 4px; display: flex; flex-direction: column; background: #e6e6e6; }
.vscroll button, .hscroll button { flex: none; width: 19px; height: 19px; border: 1px solid #ababab; background: #fff; }
.thumb { border: 1px solid #ababab; background: #fff; }
.track { background: #dadada; }
.vscroll .thumb { height: 21px; }
.vscroll .track { flex: 1; }

/* sheet tabs and status */
.sheetbar { flex: none; display: flex; align-items: center; height: 30px; padding: 0 26px 0 24px; border-top: 1px solid #999; border-bottom: 1px solid #c6c6c6; }
.nav { width: 6px; margin-right: 23px; }
.sheettab { align-self: flex-start; width: 244px; height: 27px; margin: -1px 32px 0 18px; border: 1px solid #999; border-width: 0 1px 3px; border-bottom-color: #217346; background: #fff; color: #217346; font-size: 18px; line-height: 20px; text-align: center; }
.add { margin-right: auto; }
.hscroll { display: flex; width: 728px; margin-left: 15px; }
.hscroll .track { flex: 88; }
.hscroll .thumb { flex: 602; margin-right: -1px; }
.status { flex: none; display: flex; align-items: center; height: 23px; padding-right: 9px; justify-content: flex-end; background: #f3f2f1; }
.views { display: flex; margin: 0 5px 0 25px; }
.views button { width: 50px; height: 23px; }
.zb { width: 14px; font-size: 18px; }
.status input { appearance: none; width: 125px; height: 16px; margin: 0 4px 0 5px; background: linear-gradient(#b0b0b0, #b0b0b0) center / 100% 1px no-repeat; }
.status input::-webkit-slider-thumb { appearance: none; width: 6px; height: 14px; background: #666; }
.zoom { margin-left: 17px; }
```
